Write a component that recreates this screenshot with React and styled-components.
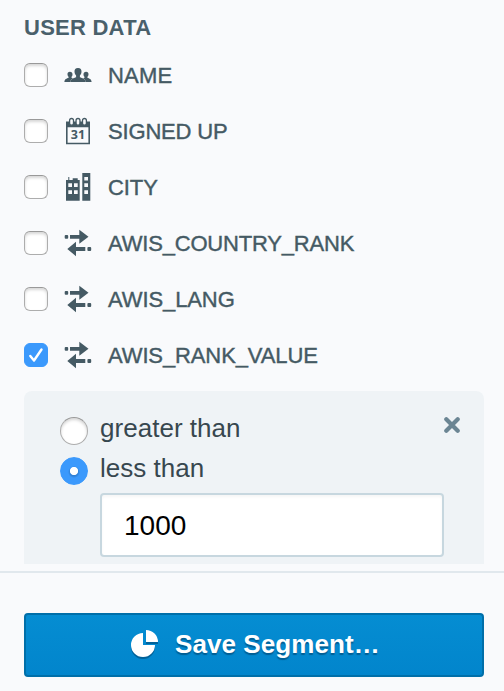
import React from "react";
import styled, { createGlobalStyle, css } from "styled-components";

const Global = createGlobalStyle`
  *, *::before, *::after { box-sizing: border-box; }
  body {
    margin: 0;
    background: #f9fafc;
    color: #455a64;
    font-family: "Liberation Sans", Arial, sans-serif;
  }
`;

const Page = styled.main`
  display: flex;
  flex-direction: column;
  width: 504px;
  height: 691px;
  overflow: hidden;
`;

const FilterList = styled.section`
  display: flex;
  flex-direction: column;
  height: 564px;
  padding: 8px 20px 0 24px;
  overflow: hidden;
`;

const Heading = styled.h2`
  margin: 0;
  height: 39px;
  font-size: 22px;
  line-height: 39px;
  font-weight: 700;
  color: #4a606b;
  letter-spacing: 0.25px;
`;

const Row = styled.label`
  display: flex;
  flex: none;
  align-items: center;
  height: 56px;
`;

const controlSkin = css`
  appearance: none;
  flex: none;
  margin: 0;
  border: 1px solid #adadad;
  border-top-color: #999;
  background: #fff;
  box-shadow: inset 0 2px 3px rgba(0, 0, 0, 0.16);
  &:checked {
    border-color: #3b99fc;
    background: #3b99fc;
    box-shadow: none;
  }
`;

const Checkbox = styled.input.attrs({ type: "checkbox" })`
  ${controlSkin}
  width: 24px;
  height: 24px;
  border-radius: 6px;
`;

const CheckSlot = styled.span`
  display: grid;
  flex: none;
  width: 24px;
  height: 24px;
  margin-right: 16px;
  > * { grid-area: 1 / 1; }
  > svg { pointer-events: none; z-index: 1; }
`;

const IconSlot = styled.svg`
  flex: none;
  width: 28px;
  height: 28px;
  margin-right: 16px;
  fill: #455a64;
`;

const RowName = styled.span`
  padding-top: 2px;
  font-size: 22px;
  line-height: 26px;
  color: #455a64;
  -webkit-text-stroke: 0.4px #455a64;
  letter-spacing: ${(p) => p.$tracking || 0}px;
`;

const Panel = styled.div`
  display: grid;
  flex: none;
  grid-template-columns: 40px 344px 16px;
  grid-template-rows: 40px 40px 64px;
  width: 460px;
  height: 190px;
  margin-top: 8px;
  padding: 22px 24px 0 36px;
  border-radius: 8px;
  background: #eff3f6;
`;

const Radio = styled.input.attrs({ type: "radio", name: "comparison" })`
  ${controlSkin}
  width: 28px;
  height: 28px;
  margin-top: 4px;
  border-radius: 50%;
  &:checked {
    background:
      radial-gradient(circle, #fff 3.7px, transparent 4.5px),
      radial-gradient(circle at 50% 54%, #2f80d6 4px, #3b99fc 6px);
  }
`;

const Choice = styled.label`
  font-size: 26px;
  line-height: 30px;
  color: #37474f;
  letter-spacing: 0.03px;
`;

const Close = styled.button`
  width: 16px;
  height: 16px;
  margin-top: 4px;
  padding: 0;
  border: 0;
  background: none;
  svg { display: block; }
`;

const ValueInput = styled.input`
  grid-column: 2;
  width: 344px;
  height: 64px;
  padding: 2px 22px 0;
  border: 2px solid #c7d7df;
  border-radius: 4px;
  outline: none;
  background: #fff;
  box-shadow: inset 0 2px 3px rgba(0, 0, 0, 0.04);
  color: #000;
  font: 28px "Liberation Sans", Arial, sans-serif;
`;

const Footer = styled.footer`
  margin-top: 7px;
  padding: 40px 20px 0 24px;
  border-top: 2px solid #e1e8ed;
`;

const SaveButton = styled.button`
  display: flex;
  align-items: center;
  justify-content: flex-start;
  width: 460px;
  height: 64px;
  padding: 0 0 2px 104px;
  border: 2px solid #006fa9;
  border-radius: 4px;
  background: linear-gradient(#058dd2, #0285cc);
  color: #fff;
  font: 700 26px "Liberation Sans", Arial, sans-serif;
  letter-spacing: 0.08px;
  text-shadow: 0 2px 1px rgba(0, 60, 100, 0.55);
  svg {
    flex: none;
    margin-right: 15px;
    filter: drop-shadow(0 2px 0.5px rgba(0, 60, 100, 0.5));
  }
`;

const PeopleIcon = () => {
  const side =
    "M5.9 10.8c-1.700 0-2.500 1.100-2.400 2.600.1 1.200.6 1.900 1.100 2.400v1C2.800 17.700.4 18 .4 21h6c.1-2.300 1.500-3.200 2.600-3.700l-1.500-.6V15.800c.5-.5 1-1.200 1-2.400 0-1.500-.9-2.600-2.600-2.600z";
  return (
    <IconSlot viewBox="0 0 28 28">
      <path d="M14 7.100c-2.600 0-3.600 1.500-3.500 3.700.1 1.700.8 2.900 1.600 3.700v1.700c-2.300 1-5.500 1.200-5.700 4.800h15.200c-.2-3.600-3.400-3.800-5.700-4.800v-1.700c.8-.8 1.500-2 1.600-3.700.1-2.200-.9-3.700-3.500-3.700z" />
      <path d={side} />
      <path transform="matrix(-1 0 0 1 28 0)" d={side} />
    </IconSlot>
  );
};

const DayNumber = styled.text`
  font: 700 12.5px "Open Sans", sans-serif;
`;

const CalendarIcon = () => (
  <IconSlot viewBox="0 0 28 28">
    <path fillRule="evenodd" d="M2 4.500h24V27.300H2zM3.600 10.300v15.400h20.800V10.300z" />
    <g fill="#f9fafc" stroke="#455a64" strokeWidth="1.300">
      <rect x="5.600" y="1.500" width="3.900" height="6.700" rx="1.950" />
      <rect x="12.050" y="1.500" width="3.900" height="6.700" rx="1.950" />
      <rect x="18.500" y="1.500" width="3.900" height="6.700" rx="1.950" />
    </g>
    <DayNumber x="14" y="22.200" textAnchor="middle">31</DayNumber>
  </IconSlot>
);

const CityIcon = () => (
  <IconSlot viewBox="0 0 28 28">
    <path fillRule="evenodd" d="M2 7h2.300V4h1v3H8.700V5.300h5V7h2v20.700H2zM4.300 10.300v3.700H8v-3.700zM10 10.300v3.700h3.700v-3.700zM4.300 17.300V21H8v-3.700zM10 17.300V21h3.700v-3.700zM18.300 0h8v27.700h-8zM20.300 4v3.400H24V4zM20.300 10.300v3.700H24v-3.700zM20.300 17.300V21H24v-3.700z" />
  </IconSlot>
);

const ArrowsIcon = () => (
  <IconSlot viewBox="0 0 28 28">
    <rect x="0.700" y="6" width="3.500" height="3.800" rx="1" />
    <path d="M6 6H15.300V0.700L24.500 7.800L15.300 14.800V9.800H6z" />
    <path d="M3.300 20L12 12.800V18H21.300V22H12V27.200z" />
    <rect x="23.400" y="18.100" width="3.800" height="3.900" rx="1" />
  </IconSlot>
);

const fields = [
  { name: "NAME", Icon: PeopleIcon, tracking: 0.2 },
  { name: "SIGNED UP", Icon: CalendarIcon, tracking: -0.17 },
  { name: "CITY", Icon: CityIcon, tracking: -0.1 },
  { name: "AWIS_COUNTRY_RANK", Icon: ArrowsIcon, tracking: -0.19 },
  { name: "AWIS_LANG", Icon: ArrowsIcon, tracking: -0.1 },
  { name: "AWIS_RANK_VALUE", Icon: ArrowsIcon, checked: true, tracking: -0.12 },
];

export default function App() {
  return (
    <Page>
      <Global />
      <FilterList>
        <Heading>USER DATA</Heading>
        {fields.map(({ name, Icon, checked, tracking }) => (
          <Row key={name}>
            <CheckSlot>
              <Checkbox defaultChecked={checked} />
              {checked && (
                <svg width="24" height="24" viewBox="0 0 24 24" fill="none" stroke="#fff" strokeWidth="2.400" strokeLinecap="round" strokeLinejoin="round">
                  <path d="M6.300 13L10 17.500L17.500 6.500" />
                </svg>
              )}
            </CheckSlot>
            <Icon />
            <RowName $tracking={tracking}>{name}</RowName>
          </Row>
        ))}
        <Panel>
          <Radio id="greater" />
          <Choice htmlFor="greater">greater than</Choice>
          <Close aria-label="Remove filter">
            <svg width="16" height="16" viewBox="0 0 16 16" stroke="#6b8593" strokeWidth="4.200" strokeLinecap="round">
              <path d="M2.300 2.300L13.700 13.700M13.700 2.300L2.300 13.700" />
            </svg>
          </Close>
          <Radio id="less" defaultChecked />
          <Choice htmlFor="less">less than</Choice>
          <ValueInput defaultValue="1000" aria-label="Value" />
        </Panel>
      </FilterList>
      <Footer>
        <SaveButton>
          <svg width="30" height="30" viewBox="0 0 30 30" fill="#fff">
            <path d="M13 4A12 12 0 1 0 25 16H13z" />
            <path d="M16 1A12 12 0 0 1 28 13H16z" />
          </svg>
          Save Segment…
        </SaveButton>
      </Footer>
    </Page>
  );
}
